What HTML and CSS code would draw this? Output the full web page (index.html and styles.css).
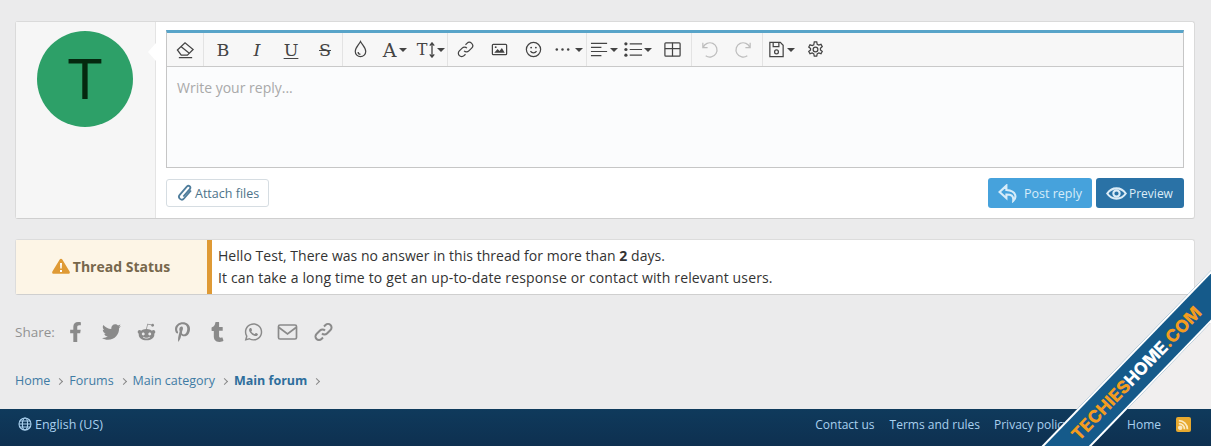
FILE: index.html
```html
<!DOCTYPE html>
<html lang="en">
<head>
<meta charset="utf-8">
<title>Main forum</title>
<link rel="stylesheet" href="styles.css">
</head>
<body>
<main class="content">
  <section class="reply-card">
    <div class="user-cell"><div class="avatar">T</div></div>
    <div class="editor-cell">
      <div class="editor">
        <div class="toolbar">
          <div class="tb-group first">
            <span class="tb"><svg class="ic" viewBox="0 0 20 20"><path d="M1.500 10.500 9.500 3l8.500 7-6 6H5.500zM5.500 7l8.500 7M3 18.500h14"/></svg></span>
          </div>
          <div class="tb-group g2">
            <span class="tb glyph">B</span>
            <span class="tb glyph it">I</span>
            <span class="tb glyph und">U</span>
            <span class="tb glyph strike">S</span>
          </div>
          <div class="tb-group g3">
            <span class="tb"><svg class="ic" viewBox="0 0 20 20"><path d="M10 1.500c2 3.800 5.500 6.500 5.500 10.500a5.500 5.500 0 0 1-11 0c0-4 3.500-6.700 5.500-10.500zM7.500 12.500a2.500 2.500 0 0 0 2.500 2.500"/></svg></span>
            <span class="tb wide glyph big">A<i class="caret"></i></span>
            <span class="tb wide2 glyph small">T<svg class="arrows" viewBox="0 0 8 18"><path d="M4 1v16M1.500 4 4 1l2.500 3M1.500 14 4 17l2.500-3"/></svg><i class="caret tight"></i></span>
          </div>
          <div class="tb-group g4">
            <span class="tb"><svg class="ic" viewBox="0 0 20 20"><path d="M8.500 11.500a3.500 3.500 0 0 0 5 0l3-3a3.500 3.500 0 0 0-5-5l-1.500 1.500M11.500 8.500a3.500 3.500 0 0 0-5 0l-3 3a3.500 3.500 0 0 0 5 5l1.500-1.500"/></svg></span>
            <span class="tb"><svg class="ic" viewBox="0 0 20 20"><rect x="2.500" y="4.500" width="15" height="11" rx="1"/><path class="fill" d="M4.500 13.500 8 9.500l2 2 2.500-3 3 5z"/><circle class="fill" cx="6" cy="7.500" r="1"/></svg></span>
            <span class="tb"><svg class="ic" viewBox="0 0 20 20"><circle cx="10" cy="10" r="7.500"/><path d="M6.800 11.800c1.500 2.200 4.900 2.200 6.400 0"/><circle class="fill" cx="7.500" cy="8" r="1"/><circle class="fill" cx="12.500" cy="8" r="1"/></svg></span>
            <span class="tb wide"><svg class="ic" viewBox="0 0 20 20"><circle class="fill" cx="4" cy="10" r="1.300"/><circle class="fill" cx="10" cy="10" r="1.300"/><circle class="fill" cx="16" cy="10" r="1.300"/></svg><i class="caret"></i></span>
          </div>
          <div class="tb-group g5">
            <span class="tb"><svg class="ic" viewBox="0 0 20 20"><path d="M1 3.500h17M1 7.800h11M1 12.100h17M1 16.500h11"/></svg><i class="caret tight"></i></span>
            <span class="tb"><svg class="ic" viewBox="0 0 20 20"><path d="M6 4h13M6 10h13M6 16h13"/><circle class="fill" cx="2" cy="4" r="1.700"/><circle class="fill" cx="2" cy="10" r="1.700"/><circle class="fill" cx="2" cy="16" r="1.700"/></svg><i class="caret tight"></i></span>
            <span class="tb"><svg class="ic" viewBox="0 0 20 20"><rect x="2" y="3" width="16" height="14" rx="1"/><path d="M2 9h16M10 3v14"/></svg></span>
          </div>
          <div class="tb-group g6">
            <span class="tb off"><svg class="ic" viewBox="0 0 20 20"><path d="M3 3v5h5M3.300 8A7.500 7.500 0 1 1 6 16.500"/></svg></span>
            <span class="tb off"><svg class="ic" viewBox="0 0 20 20"><path d="M17 3v5h-5M16.700 8A7.500 7.500 0 1 0 14 16.500"/></svg></span>
          </div>
          <div class="tb-group g7">
            <span class="tb wide"><svg class="ic" viewBox="0 0 20 20"><path d="M3 2.500h11l3 3v12H3zM6.500 2.500v4.500h6v-4.500"/><circle cx="10" cy="12.500" r="2"/></svg><i class="caret tight"></i></span>
            <span class="tb narrow"><svg class="ic" viewBox="0 0 20 20"><circle cx="10" cy="10" r="2.500"/><path d="M8.700 2h2.600l.5 2.500 1.600.9 2.400-.8 1.300 2.300-1.900 1.700v1.800l1.900 1.700-1.300 2.300-2.400-.8-1.600.9-.5 2.500H8.700l-.5-2.500-1.600-.9-2.400.8-1.300-2.300 1.900-1.700V9.100L2.900 7.400l1.300-2.300 2.400.8 1.600-.9z"/></svg></span>
          </div>
        </div>
        <div class="editor-body">Write your reply...</div>
      </div>
      <div class="actions">
        <button class="btn attach"><svg class="clip" viewBox="0 0 16 18"><path d="M14 6.500 7 14.500a2.800 2.800 0 0 1-4.300-3.600l7.300-8.600a2 2 0 0 1 3 2.600L6.300 12.500"/></svg>Attach files</button>
        <div class="actions-right">
          <button class="btn primary"><svg class="btn-ic" viewBox="0 0 20 18"><path d="M8 1.500 1.500 7.500 8 13.500V10c4.500 0 7 .8 6.500 6 3-2.500 4-9.500-6.500-10.300z"/></svg>Post reply</button>
          <button class="btn dark"><svg class="btn-ic" viewBox="0 0 20 18"><path d="M1.200 9C5.500 2.500 14.500 2.500 18.800 9 14.500 15.500 5.500 15.500 1.200 9z"/><circle cx="10" cy="9" r="3"/></svg>Preview</button>
        </div>
      </div>
    </div>
  </section>

  <section class="status">
    <div class="status-label">
      <svg class="warn" viewBox="0 0 18 16"><path d="M9 .8c.6 0 1 .3 1.300.8l7.300 12c.6 1 0 2.200-1.200 2.200H1.600C.4 15.800-.2 14.600.4 13.600l7.300-12C8 1.100 8.400.8 9 .8z"/><path class="mark" d="M8 5h2l-.3 5.500H8.300zM8 12h2v2H8z"/></svg>
      <span>Thread Status</span>
    </div>
    <div class="status-text">
      <p class="line-a">Hello Test, There was no answer in this thread for more than <b>2</b> days.</p>
      <p class="line-b">It can take a long time to get an up-to-date response or contact with relevant users.</p>
    </div>
  </section>

  <div class="share">
    <span class="share-label">Share:</span>
    <svg class="si" viewBox="0 0 320 512"><path d="M279.14 288l14.22-92.66h-88.91v-60.13c0-25.35 12.42-50.06 52.24-50.06h40.42V6.26S260.43 0 225.36 0c-73.22 0-121.08 44.38-121.08 124.72v70.62H22.89V288h81.39v224h100.17V288z"/></svg>
    <svg class="si" viewBox="0 0 512 512"><path d="M459.37 151.716c.325 4.548.325 9.097.325 13.645 0 138.72-105.583 298.558-298.558 298.558-59.452 0-114.68-17.219-161.137-47.106 8.447.974 16.568 1.299 25.34 1.299 49.055 0 94.213-16.568 130.274-44.832-46.132-.975-84.792-31.188-98.112-72.772 6.498.974 12.995 1.624 19.818 1.624 9.421 0 18.843-1.3 27.614-3.573-48.081-9.747-84.143-51.98-84.143-102.985v-1.299c13.969 7.797 30.214 12.67 47.431 13.319-28.264-18.843-46.781-51.005-46.781-87.391 0-19.492 5.197-37.36 14.294-52.954 51.655 63.675 129.3 105.258 216.365 109.807-1.624-7.797-2.599-15.918-2.599-24.04 0-57.828 46.782-104.934 104.934-104.934 30.213 0 57.502 12.67 76.67 33.137 23.715-4.548 46.456-13.32 66.599-25.34-7.798 24.366-24.366 44.833-46.132 57.827 21.117-2.273 41.584-8.122 60.426-16.243-14.292 20.791-32.161 39.308-52.628 54.253z"/></svg>
    <svg class="si" viewBox="0 0 512 512"><path d="M440.3 203.5c-15 0-28.2 6.2-37.9 15.9-35.7-24.7-83.8-40.6-137.1-42.3L293 52.3l88.2 19.8c0 21.6 17.6 39.2 39.2 39.2 22 0 39.7-18.1 39.7-39.7s-17.6-39.7-39.7-39.7c-15.4 0-28.7 9.3-35.3 22l-97.4-21.6c-4.9-1.3-9.7 2.2-11 7.1L246.3 177c-52.9 2.2-100.5 18.1-136.3 42.8-9.7-10.1-23.4-16.3-38.4-16.3-55.6 0-73.8 74.6-22.9 100.1-1.8 7.9-2.6 16.3-2.6 24.7 0 83.8 94.4 151.7 210.3 151.7 116.4 0 210.8-67.9 210.8-151.7 0-8.4-.9-17.2-3.1-25.1 49.9-25.6 31.5-99.7-23.8-99.7zM129.4 308.9c0-22 17.6-39.7 39.7-39.7 21.6 0 39.2 17.6 39.2 39.7 0 21.6-17.6 39.2-39.2 39.2-22 .1-39.7-17.6-39.7-39.2zm214.3 93.5c-36.4 36.4-139.1 36.4-175.5 0-4-3.5-4-9.7 0-13.7 3.5-3.5 9.7-3.5 13.2 0 27.8 28.5 120 29 149 0 3.5-3.5 9.7-3.5 13.2 0 4.1 4 4.1 10.2.1 13.7zm-.8-54.2c-21.6 0-39.2-17.6-39.2-39.2 0-22 17.6-39.7 39.2-39.7 22 0 39.7 17.6 39.7 39.7-.1 21.5-17.7 39.2-39.7 39.2z"/></svg>
    <svg class="si" viewBox="0 0 384 512"><path d="M204 6.500C101.400 6.500 0 74.900 0 185.600 0 256 39.600 296 63.600 296c9.900 0 15.600-27.600 15.600-35.400 0-9.300-23.700-29.100-23.700-67.800 0-80.400 61.200-137.400 140.400-137.400 68.100 0 118.500 38.700 118.500 109.800 0 53.100-21.300 152.700-90.300 152.700-24.900 0-46.200-18-46.200-43.800 0-37.800 26.400-74.400 26.400-113.400 0-66.200-93.900-54.200-93.900 25.800 0 16.800 2.100 35.400 9.600 50.700-13.800 59.400-42 147.900-42 209.100 0 18.900 2.700 37.500 4.500 56.400 3.400 3.800 1.700 3.400 6.900 1.500 50.400-69 48.600-82.500 71.400-172.800 12.300 23.400 44.100 36 69.300 36 106.200 0 153.900-103.500 153.900-196.800C384 71.300 298.200 6.500 204 6.500z"/></svg>
    <svg class="si" viewBox="0 0 320 512"><path d="M309.800 480.300c-13.600 14.500-50 31.700-97.400 31.700-120.800 0-147-88.800-147-140.600v-144H17.900c-5.500 0-10-4.500-10-10v-68c0-7.200 4.500-13.600 11.300-16 62-21.800 81.500-76 84.300-117.100.8-11 6.500-16.300 16.100-16.300h70.900c5.500 0 10 4.500 10 10v115.200h83c5.500 0 10 4.400 10 9.900v81.700c0 5.500-4.500 10-10 10h-83.400V360c0 34.200 23.700 53.600 68 35.800 4.800-1.900 9-3.200 12.700-2.200 3.500.9 5.800 3.400 7.400 7.900l22 64.300c1.800 5 3.300 10.600-.4 14.500z"/></svg>
    <svg class="si wa" viewBox="0 0 448 512"><path d="M380.900 97.100C339 55.100 283.200 32 223.900 32c-122.400 0-222 99.600-222 222 0 39.100 10.200 77.300 29.600 111L0 480l117.700-30.900c32.400 17.700 68.900 27 106.100 27h.1c122.300 0 224.100-99.600 224.100-222 0-59.300-25.200-115-67.100-157zm-157 341.600c-33.200 0-65.700-8.900-94-25.700l-6.700-4-69.800 18.300L72 359.200l-4.400-7c-18.500-29.400-28.200-63.300-28.200-98.200 0-101.700 82.800-184.500 184.600-184.500 49.300 0 95.600 19.200 130.400 54.100 34.800 34.900 56.200 81.200 56.100 130.500 0 101.800-84.900 184.600-186.600 184.600zm101.200-138.200c-5.500-2.800-32.800-16.200-37.900-18-5.100-1.900-8.800-2.800-12.500 2.800-3.700 5.600-14.300 18-17.600 21.800-3.200 3.700-6.500 4.200-12 1.400-32.600-16.300-54-29.100-75.500-66-5.700-9.800 5.700-9.100 16.300-30.300 1.800-3.700.9-6.900-.5-9.700-1.400-2.800-12.500-30.100-17.100-41.200-4.500-10.800-9.100-9.300-12.500-9.500-3.200-.2-6.900-.2-10.600-.2-3.700 0-9.700 1.400-14.800 6.900-5.100 5.600-19.400 19-19.400 46.300 0 27.300 19.900 53.700 22.600 57.400 2.800 3.700 39.100 59.700 94.800 83.800 35.200 15.200 49 16.500 66.600 13.900 10.700-1.600 32.800-13.400 37.400-26.400 4.600-13 4.600-24.100 3.200-26.400-1.300-2.500-5-3.900-10.500-6.600z"/></svg>
    <svg class="si stroke" viewBox="0 0 20 20"><rect x="1" y="3" width="18" height="14" rx="1.500"/><path d="M1.500 5.500 10 12l8.500-6.500"/></svg>
    <svg class="si stroke thick" viewBox="0 0 20 20"><path d="M8.500 11.500a3.500 3.500 0 0 0 5 0l3.500-3.500a3.500 3.500 0 0 0-5-5l-1.500 1.500M11.500 8.500a3.500 3.500 0 0 0-5 0L3 12a3.500 3.500 0 0 0 5 5l1.500-1.500"/></svg>
  </div>

  <nav class="crumbs">
    <a>Home</a><i class="chev"></i>
    <a>Forums</a><i class="chev"></i>
    <a>Main category</a><i class="chev"></i>
    <a class="current">Main forum</a><i class="chev"></i>
  </nav>
</main>

<footer class="footer">
  <a class="lang"><svg class="globe" viewBox="0 0 14 14"><circle cx="7" cy="7" r="6"/><ellipse cx="7" cy="7" rx="2.600" ry="6"/><path d="M1 7h12M1.800 4h10.400M1.800 10h10.400"/></svg>English (US)</a>
  <div class="foot-links">
    <a>Contact us</a>
    <a>Terms and rules</a>
    <a class="foot-privacy">Privacy policy</a>
    <a class="foot-home">Home</a>
    <span class="rss"><svg viewBox="0 0 16 16"><circle cx="4.500" cy="11.500" r="1.500"/><path d="M3 7a6 6 0 0 1 6 6M3 3.800a9.200 9.200 0 0 1 9.200 9.200"/></svg></span>
  </div>
</footer>

<div class="overlay">
  <div class="wash"></div>
  <div class="ribbon"><span class="orange">TECHIES</span><span class="white">HOME</span><span class="orange">.COM</span></div>
</div>
</body>
</html>
```

FILE: styles.css
```css
* { box-sizing: border-box; }
html, body { margin: 0; height: 446px; overflow: hidden; }
body {
  position: relative;
  width: 1211px;
  height: 446px;
  background: #ebebec;
  font-family: "Open Sans", "Liberation Sans", sans-serif;
  font-size: 13px;
  color: #3c3c3c;
  display: flex;
  flex-direction: column;
}
.content { flex: 1; min-height: 0; padding: 21px 16px 0 15px; }

.reply-card {
  display: flex;
  height: 198px;
  background: #fff;
  border: 1px solid #dadada;
  border-bottom-color: #cfcfcf;
  border-radius: 3px;
}
.user-cell {
  position: relative;
  width: 140px;
  flex: none;
  padding: 9px 0 0 21px;
  background: #f6f6f6;
  border-right: 1px solid #e4e4e4;
}
.user-cell::after {
  content: "";
  position: absolute;
  right: -1px;
  top: 21px;
  border: 9px solid transparent;
  border-right-color: #fff;
  border-left-width: 0;
  border-right-width: 8px;
}
.avatar {
  width: 96px;
  height: 96px;
  border-radius: 50%;
  background: #2da068;
  color: #05280f;
  font-family: "Liberation Sans", sans-serif;
  font-size: 58px;
  line-height: 96px;
  text-align: center;
}
.editor-cell { flex: 1; padding: 8px 10px 0; }
.editor {
  border: 1px solid #c6c6c6;
  border-top: 3px solid #58a4c9;
}
.toolbar {
  display: flex;
  height: 34px;
  background: #f7f7f7;
  border-bottom: 1px solid #c9c9c9;
  color: #444;
}
.tb-group {
  display: flex;
  align-items: center;
  border-right: 1px solid #e3e3e3;
}
.tb-group.first { width: 37px; justify-content: center; }
.g2 { width: 139px; padding-left: 2px; }
.g3 { width: 105px; }
.g4 { width: 139px; }
.g5 { width: 105px; }
.g6 { width: 71px; }
.g7 { border-right: 0; }
.tb {
  display: flex;
  align-items: center;
  justify-content: center;
  width: 34px;
  height: 100%;
  flex: none;
}
.tb.wide { width: 36px; }
.tb.wide2 { width: 36px; }
.tb.narrow { width: 32px; }
.ic { width: 19px; height: 19px; fill: none; stroke: #444; stroke-width: 1.300; flex: none; }
.ic .fill { fill: #444; stroke: none; }
.tb.off .ic { stroke: #bdbdbd; }
.glyph { font-family: "DejaVu Serif", serif; font-size: 17.500px; color: #444; }
.glyph.big { font-size: 19px; }
.glyph.small { font-size: 16px; }
.glyph.it { font-style: italic; }
.glyph.und { text-decoration: underline; text-underline-offset: 2px; text-decoration-thickness: 1px; }
.glyph.strike { text-decoration: line-through; text-decoration-thickness: 1px; }
.arrows { width: 8px; height: 16px; fill: none; stroke: #444; stroke-width: 1.500; margin-left: 1px; flex: none; }
.caret {
  flex: none;
  margin-left: 3px;
  border: 4px solid transparent;
  border-top: 4px solid #444;
  border-bottom: 0;
}
.caret.tight { margin-left: 1px; }
.editor-body {
  height: 100px;
  padding: 12px 10px;
  background: #fbfcfd;
  color: #a9a9a9;
  font-size: 14px;
  line-height: 18px;
}

.actions {
  display: flex;
  justify-content: space-between;
  align-items: center;
  padding-top: 10px;
}
.actions-right { display: flex; gap: 4px; }
.btn {
  display: flex;
  align-items: center;
  height: 30px;
  border-radius: 3px;
  font: 12.500px "Open Sans", "Liberation Sans", sans-serif;
  border: 1px solid transparent;
}
.attach {
  width: 103px;
  height: 28px;
  padding: 0 0 0 10px;
  background: #fff;
  border-color: #d6dde2;
  color: #4d7389;
}
.clip { width: 16px; height: 18px; fill: none; stroke: #4f7d9c; stroke-width: 1.800; margin-right: 2px; }
.primary { width: 104px; padding-left: 9px; background: #46a2dc; color: #d6ecf9; }
.dark { width: 88px; padding-left: 9px; background: #2a72a6; color: #dcecf7; font-size: 12px; }
.btn-ic { width: 21px; height: 19px; fill: none; stroke: currentColor; stroke-width: 2; margin-right: 5px; flex: none; }
.dark .btn-ic { margin-right: 2px; }

.status {
  display: flex;
  height: 56px;
  margin-top: 20px;
  background: #fff;
  border: 1px solid #dcdcdc;
  border-bottom-color: #cfcfcf;
  border-radius: 3px;
}
.status-label {
  display: flex;
  align-items: center;
  justify-content: center;
  gap: 3px;
  width: 191px;
  background: #fdf5e6;
  color: #77674c;
  font-size: 14px;
  font-weight: 700;
  padding: 0 1px 2px 0;
}
.warn { width: 18px; height: 16px; fill: #df9a35; }
.warn .mark { fill: #fff; }
.status-text {
  flex: 1;
  border-left: 5px solid #df9a35;
  padding: 5px 0 0 6px;
  font-size: 14px;
  line-height: 22px;
  color: #333;
}
.status-text p { margin: 0; }
.line-a { letter-spacing: .04px; }
.line-b { letter-spacing: .15px; }

.share {
  display: flex;
  align-items: center;
  height: 26px;
  margin-top: 24px;
  color: #929292;
  font-size: 13.500px;
}
.share-label { width: 51px; }
.si { width: 19px; height: 20px; fill: #8a8a8a; margin-right: 16.600px; flex: none; }
.si.wa { margin-right: 14.500px; }
.si.stroke { fill: none; stroke: #8a8a8a; stroke-width: 1.700; width: 21px; margin-right: 15px; }
.si.thick { stroke-width: 2; }

.crumbs {
  display: flex;
  align-items: center;
  margin-top: 27px;
  font-size: 12.500px;
  color: #3f7ba4;
  line-height: 18px;
}
.current { font-weight: 700; color: #2e6e9c; }
.chev {
  width: 5px;
  height: 5px;
  margin: 0 7px 0 7px;
  border-top: 1px solid #888;
  border-right: 1px solid #888;
  transform: rotate(45deg);
}

.footer {
  display: flex;
  flex: none;
  justify-content: space-between;
  align-items: center;
  height: 37px;
  padding: 0 20px 7px 18px;
  background: linear-gradient(#0f3a5c, #0e3050);
  color: #a9d0ee;
  font-size: 12px;
}
.lang { display: flex; align-items: center; gap: 3px; font-size: 12.500px; }
.globe { width: 14px; height: 14px; fill: none; stroke: #a9d0ee; stroke-width: 1.100; }
.foot-links { display: flex; align-items: center; gap: 15px; }
.foot-privacy { margin-left: -1px; }
.foot-home { margin-left: 43px; }
.rss {
  display: block;
  width: 15px;
  height: 15px;
  background: #e7a92f;
  border-radius: 2px;
}
.rss svg { display: block; width: 15px; height: 15px; fill: #fbe9c0; stroke: #fbe9c0; stroke-width: 1.800; }
.rss svg path { fill: none; }

.overlay {
  position: absolute;
  inset: 0;
  overflow: hidden;
  pointer-events: none;
}
.wash {
  position: absolute;
  right: 0;
  top: 309px;
  width: 110px;
  height: 100px;
  background: #f1efef;
  clip-path: polygon(100% 0, 100% 100%, 0 100%);
}
.ribbon {
  position: absolute;
  left: 969px;
  top: 353px;
  width: 340px;
  height: 36px;
  padding: 0 7px 0 0;
  display: flex;
  align-items: center;
  justify-content: center;
  background: #155a8a;
  border-top: 2px solid #fff;
  border-bottom: 2px solid #fff;
  transform: rotate(-46deg);
  font-family: "Inter", "Liberation Sans", sans-serif;
  font-weight: 800;
  font-size: 17.500px;
  line-height: 1;
}
.ribbon .orange { color: #f39c1f; }
.ribbon .white { color: #fff; }
```
